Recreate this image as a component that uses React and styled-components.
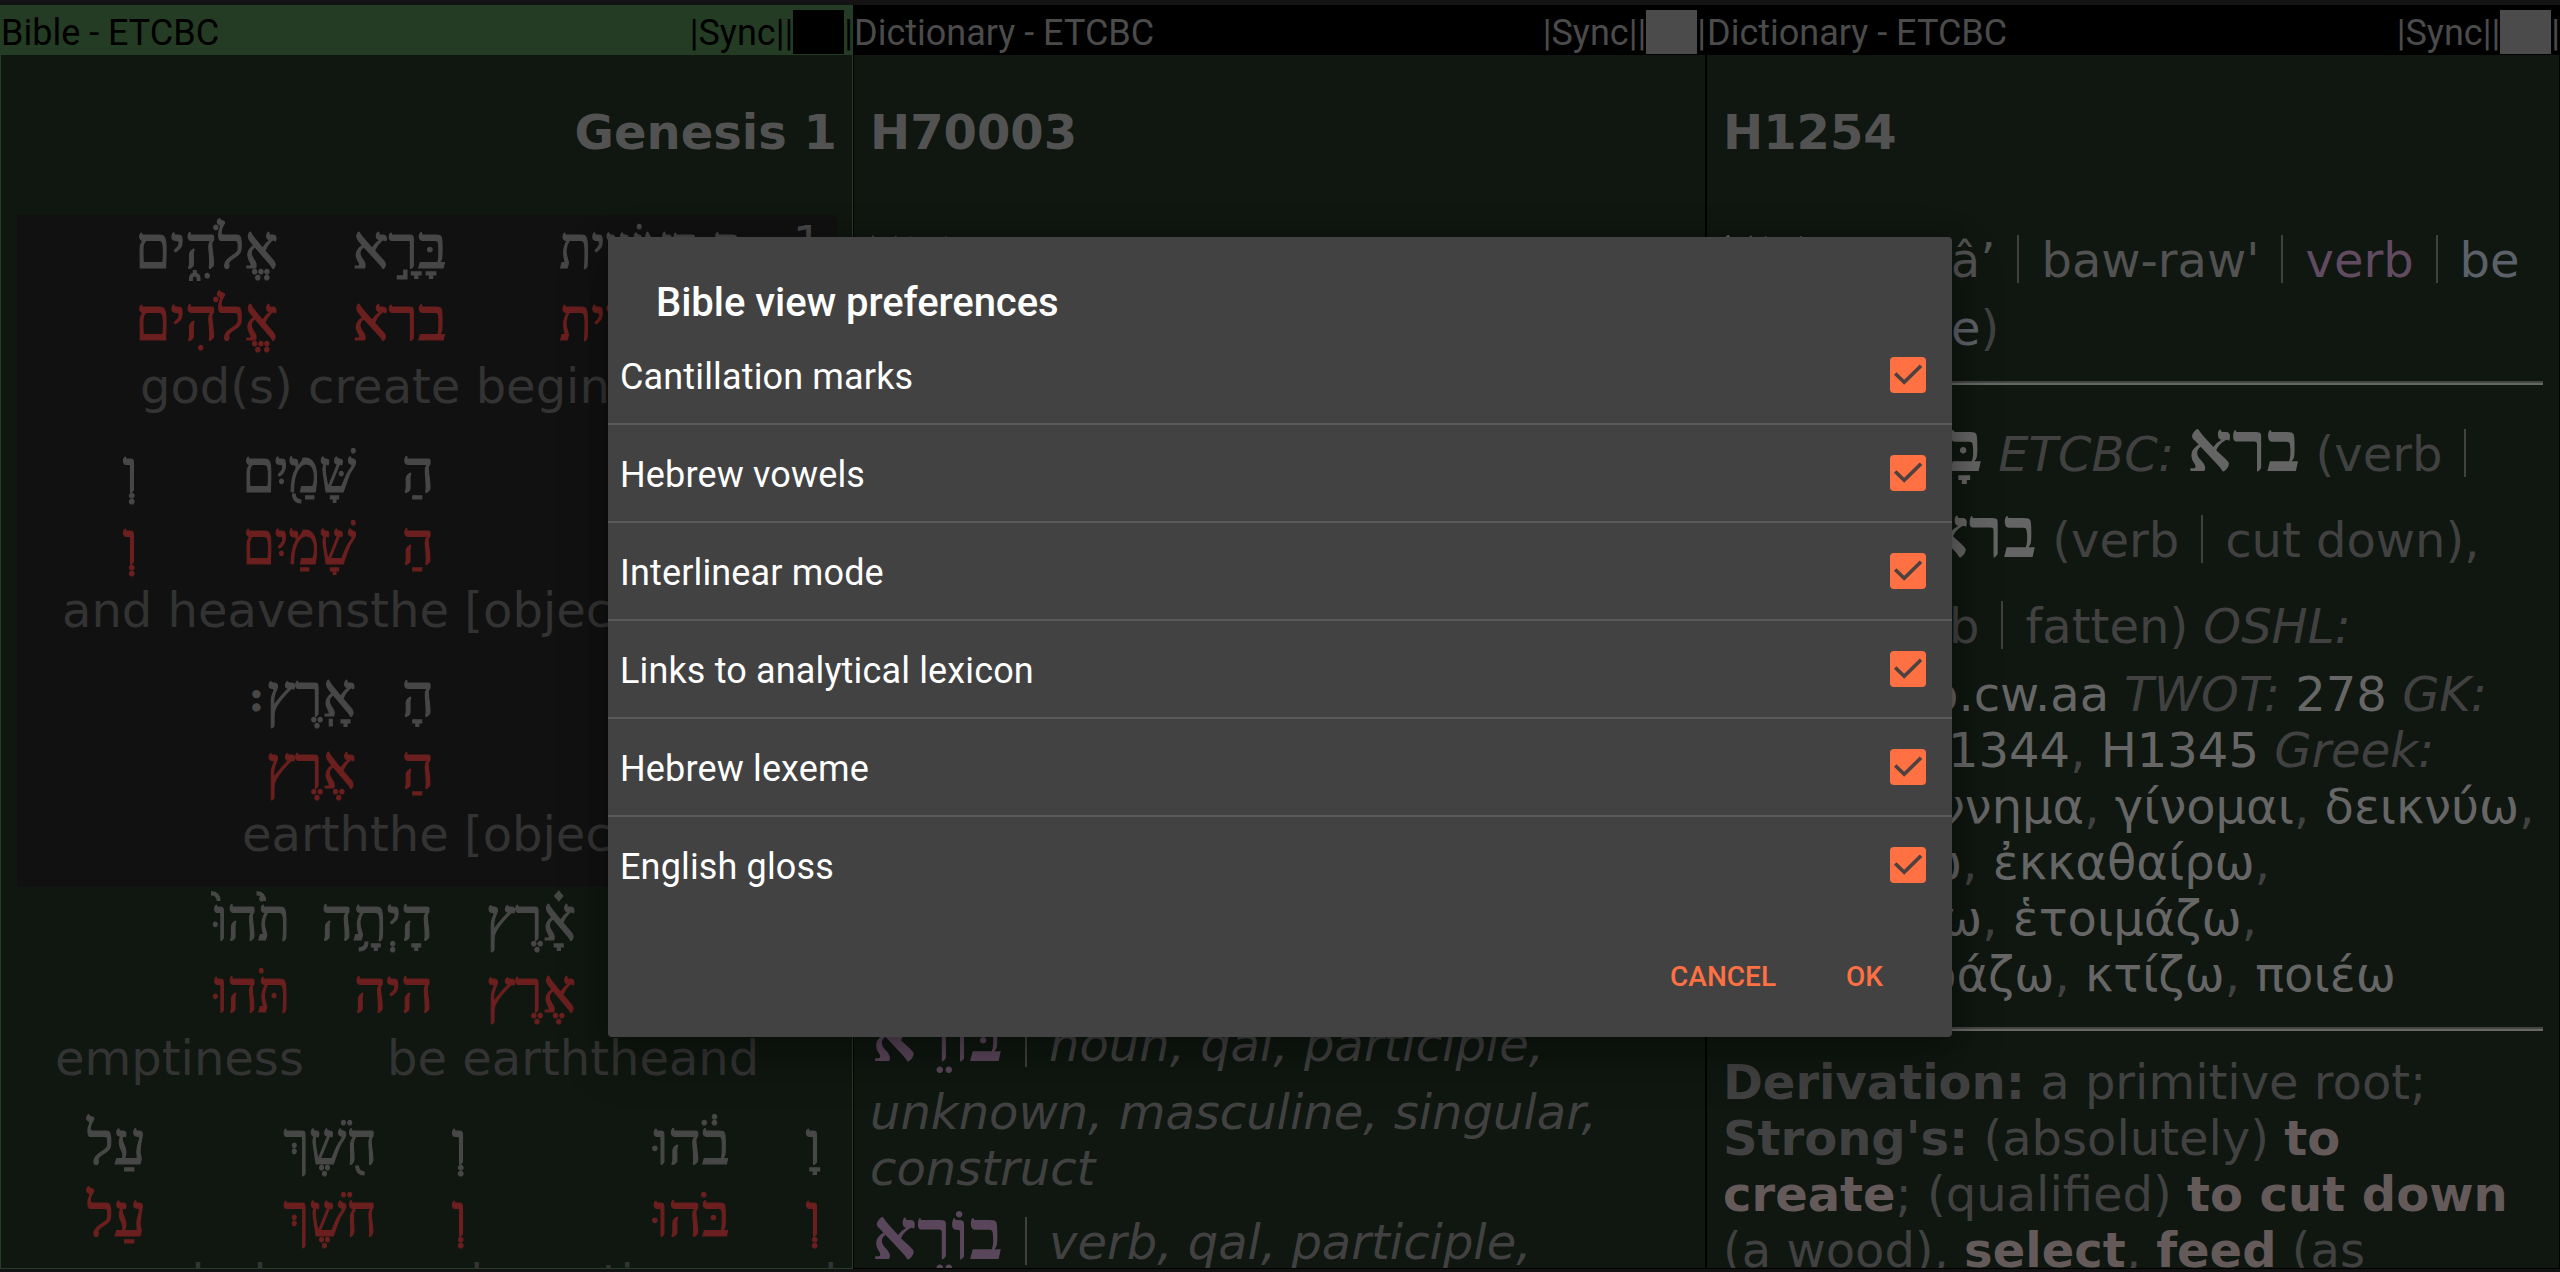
import React from "react";
import styled, { createGlobalStyle } from "styled-components";

const Global = createGlobalStyle`
  html, body { margin: 0; background: #131313; }
  * { box-sizing: border-box; }
`;

const Screen = styled.div`
  position: relative;
  width: 2560px;
  height: 1272px;
  padding: 5px 0 3px;
  display: flex;
  overflow: hidden;
  background: #131313;
  font-family: "DejaVu Sans", sans-serif;
  font-size: 48px;
  line-height: 56px;
  color: #3f3f3f;
`;

const Pane = styled.section`
  flex: none;
  width: ${(p) => p.$w}px;
  height: 1264px;
  display: flex;
  flex-direction: column;
  overflow: hidden;
`;

const TitleBar = styled.header`
  flex: none;
  height: 50px;
  padding: 5px 0 0 1px;
  display: flex;
  align-items: center;
  justify-content: space-between;
  font-family: Roboto, sans-serif;
  font-size: 36px;
  line-height: 42px;
  white-space: pre;
  background: ${(p) => (p.$active ? "#243c24" : "#000")};
  color: ${(p) => (p.$active ? "#000" : "#4b4b4b")};
`;

const BarActions = styled.span`
  display: flex;
  align-items: center;
`;

const Blocks = styled.i`
  display: block;
  width: 51px;
  height: 44px;
  margin-top: -2px;
  background: ${(p) => (p.$active ? "#000" : "#4b4b4b")};
`;

const PaneBody = styled.div`
  flex: 1;
  overflow: hidden;
  padding: 49px ${(p) => (p.$active ? 15 : 16)}px 0 16px;
  background: #0f1710;
  border: 1px solid ${(p) => (p.$active ? "#263d27" : "#000")};
  border-top: 0;
`;

const Heading = styled.h1`
  margin: 0;
  font-size: 48px;
  line-height: 56px;
  font-weight: bold;
  color: #525252;
  text-align: ${(p) => p.$align || "left"};
`;

const Verse = styled.div`
  margin-top: ${(p) => p.$top || 0}px;
  background: ${(p) => (p.$selected ? "#111111" : "transparent")};
`;

const Interlinear = styled.div`
  height: 224px;
`;

const WordRow = styled.div`
  direction: rtl;
  display: flex;
  height: 72px;
  font-family: "Liberation Serif", serif;
  font-size: 60px;
  line-height: 67px;
  color: ${(p) => (p.$lexeme ? "#6b1f1e" : "#474747")};
  -webkit-text-stroke: 1.2px currentColor;
`;

const Word = styled.span`
  flex: none;
  width: ${(p) => p.$w}px;
  margin-right: ${(p) => p.$gap}px;
  white-space: nowrap;
  transform: scaleX(${(p) => p.$fit});
  transform-origin: 100% 50%;
`;

const SofPasuq = styled(Word)`
  font-size: 44px;
  font-weight: bold;
`;

const VerseNumber = styled.span`
  flex: none;
  width: 33px;
  margin-right: 14px;
  font-family: "DejaVu Sans", sans-serif;
  font-size: 48px;
  line-height: 56px;
  -webkit-text-stroke: 0;
`;

const GlossRow = styled.div`
  display: flex;
  margin-top: -1px;
  white-space: pre;
  color: #333333;
`;

const Gloss = styled.span`
  flex: none;
  margin-left: ${(p) => p.$gap}px;
  width: ${(p) => p.$w}px;
`;

const Line = styled.div`
  height: 56px;
  margin-top: ${(p) => p.$top || 0}px;
  padding-left: ${(p) => p.$indent || 0}px;
  white-space: pre;
  color: ${(p) => p.$color || "#414141"};
`;

const Rule = styled.div`
  height: 4px;
  margin-top: ${(p) => p.$top}px;
  border-top: 2px solid #444644;
  border-bottom: 2px solid #666866;
`;

const Divider = styled.i`
  display: inline-block;
  width: 2px;
  height: 48px;
  margin: 0 22px;
  vertical-align: -6px;
  background: #414141;
`;

const Hebrew = styled.span`
  display: inline-block;
  direction: rtl;
  width: ${(p) => p.$w}px;
  margin-right: ${(p) => p.$after || 0}px;
  font-family: "Liberation Serif", serif;
  font-size: 70px;
  line-height: 0;
  font-weight: ${(p) => (p.$bold ? "bold" : "normal")};
  color: ${(p) => p.$color || "#646464"};
`;

const Ref = styled.span`
  color: #666666;
`;
const Pos = styled.span`
  color: #614b61;
`;
const Sense = styled.span`
  color: #5c6068;
`;
const Term = styled.b`
  color: #655a5a;
`;

const Dialog = styled.div`
  position: absolute;
  left: 608px;
  top: 237px;
  width: 1344px;
  height: 800px;
  border-radius: 4px;
  background: #424242;
  box-shadow: 0 20px 50px rgba(0, 0, 0, 0.3), 0 0 20px rgba(0, 0, 0, 0.2);
  color: #fff;
  font-family: Roboto, sans-serif;
  display: flex;
  flex-direction: column;
`;

const DialogTitle = styled.h2`
  margin: 0;
  height: 90px;
  padding: 42px 48px 0;
  font-size: 40px;
  line-height: 47px;
  font-weight: 500;
  letter-spacing: -0.05px;
`;

const Option = styled.label`
  display: flex;
  align-items: center;
  justify-content: space-between;
  height: ${(p) => (p.$last ? 96 : 98)}px;
  padding: 0 26px 0 12px;
  border-bottom: ${(p) => (p.$last ? 0 : 2)}px solid #5a5a5a;
  font-size: 36px;
  letter-spacing: 0.15px;
`;

const OptionText = styled.span`
  padding-top: 3px;
`;

const Box = styled.span`
  width: 36px;
  height: 36px;
  border-radius: 4px;
  background: #ff7043;
  display: flex;
  align-items: center;
  justify-content: center;
`;

const Buttons = styled.div`
  margin-top: auto;
  padding: 0 69px 42px 0;
  display: flex;
  justify-content: flex-end;
  gap: 70px;
`;

const Button = styled.button`
  border: 0;
  padding: 0;
  background: none;
  color: #ff7043;
  font: 500 28px/36px Roboto, sans-serif;
`;

const Check = () => (
  <Box>
    <svg width="36" height="36" viewBox="0 0 36 36" fill="none" stroke="#4b4240" strokeWidth="3.6">
      <path d="M5.2 16.5 L14.2 25.3 L31 8.7" />
    </svg>
  </Box>
);

/* Words are listed right to left as [text, right edge, left edge, horizontal fit] within the pane. */
function Words({ items, lexeme, number }) {
  let edge = number ? 788 : 835;
  return (
    <WordRow $lexeme={lexeme}>
      {number && <VerseNumber>{number}</VerseNumber>}
      {items.map(([text, right, left, fit = 1], i) => {
        const gap = edge - right;
        edge = left;
        const Cell = text === ":" ? SofPasuq : Word;
        return (
          <Cell key={i} $gap={gap} $w={right - left} $fit={fit}>
            {text}
          </Cell>
        );
      })}
    </WordRow>
  );
}

function Glosses({ items }) {
  let edge = 17;
  return (
    <GlossRow>
      {items.map(([text, left, right], i) => {
        const gap = left - edge;
        edge = right;
        return (
          <Gloss key={i} $gap={gap} $w={right - left}>
            {text}
          </Gloss>
        );
      })}
    </GlossRow>
  );
}

const VERSE_1 = [
  {
    number: "1",
    words: [["בְּ", 740, 714, 0.95], ["רֵאשִׁ֖ית", 697, 558, 0.87], ["בָּרָ֣א", 445, 355], ["אֱלֹהִ֑ים", 276, 137, 0.94]],
    lexemes: [["בְּ", 740, 714, 0.95], ["רֵאשִׁית", 697, 558, 0.87], ["ברא", 445, 355], ["אֱלֹהִים", 276, 137, 0.94]],
    glosses: [["god(s) create beginning", 140, 740]],
  },
  {
    words: [["הַ", 432, 405, 0.93], ["שָּׁמַ֖יִם", 354, 246, 0.865], ["וְ", 136, 123]],
    lexemes: [["הַ", 432, 405, 0.93], ["שָׁמַיִם", 354, 246, 0.865], ["וְ", 136, 123]],
    glosses: [["and heavensthe [object", 62, 740]],
  },
  {
    words: [["הָ", 432, 405, 0.93], ["אָֽרֶץ", 354, 269, 0.93], [":", 262, 246]],
    lexemes: [["הַ", 432, 405, 0.93], ["אֶרֶץ", 354, 269, 0.93]],
    glosses: [["earththe [object", 242, 740]],
  },
];

const VERSE_2 = [
  {
    words: [["אָ֗רֶץ", 574, 489, 0.93], ["הָיְתָ֥ה", 431, 322, 0.92], ["תֹ֙הוּ֙", 288, 212, 0.88]],
    lexemes: [["אֶרֶץ", 574, 489, 0.93], ["היה", 431, 355, 0.93], ["תֹּהוּ", 288, 212, 0.88]],
    glosses: [["emptiness", 55, 306], ["be earththeand", 387, 762]],
  },
  {
    words: [["וָ", 819, 807], ["בֹ֔הוּ", 728, 653, 0.97], ["וְ", 465, 453], ["חֹ֖שֶׁךְ", 375, 281, 0.87], ["עַל", 144, 87, 0.95]],
    lexemes: [["וְ", 819, 807], ["בֹּהוּ", 728, 653, 0.97], ["וְ", 465, 453], ["חֹשֶׁךְ", 375, 281, 0.87], ["עַל", 144, 87, 0.95]],
    glosses: [["upon darkness", 38, 390], ["and", 393, 490], ["emptiness", 495, 745], ["and", 747, 840]],
  },
];

const Segment = ({ data }) => (
  <Interlinear>
    <Words items={data.words} number={data.number} />
    <Words items={data.lexemes} lexeme />
    <Glosses items={data.glosses} />
  </Interlinear>
);

const OPTIONS = [
  "Cantillation marks",
  "Hebrew vowels",
  "Interlinear mode",
  "Links to analytical lexicon",
  "Hebrew lexeme",
  "English gloss",
];

const Bar = ({ title, active }) => (
  <TitleBar $active={active}>
    <span>{title}</span>
    <BarActions>
      |Sync||
      <Blocks $active={active} />|
    </BarActions>
  </TitleBar>
);

export default function App() {
  return (
    <Screen>
      <Global />
      <Pane $w={853}>
        <Bar title="Bible - ETCBC" active />
        <PaneBody $active>
          <Heading $align="right">Genesis 1</Heading>
          <Verse $top={55} $selected>
            {VERSE_1.map((s, i) => (
              <Segment key={i} data={s} />
            ))}
          </Verse>
          <Verse>
            {VERSE_2.map((s, i) => (
              <Segment key={i} data={s} />
            ))}
          </Verse>
        </PaneBody>
      </Pane>

      <Pane $w={853}>
        <Bar title="Dictionary - ETCBC" />
        <PaneBody>
          <Heading>H70003</Heading>
          <Line $top={72}>
            <Hebrew $w={106} $color="#414141">ברא</Hebrew>
          </Line>
          <Line $top={728}>
            <Hebrew $w={133} $bold $color="#5a465a">בּוֹרֵא</Hebrew>
            <Divider />
            <i>noun, qal, participle,</i>
          </Line>
          <Line $top={12}>
            <i>unknown, masculine, singular,</i>
          </Line>
          <Line>
            <i>construct</i>
          </Line>
          <Line $top={18}>
            <Hebrew $w={133} $bold $color="#5a465a">בוֹרֵא</Hebrew>
            <Divider />
            <i>verb, qal, participle,</i>
          </Line>
        </PaneBody>
      </Pane>

      <Pane $w={854}>
        <Bar title="Dictionary - ETCBC" />
        <PaneBody>
          <Heading>H1254</Heading>
          <Line $top={72} $color="#525252">
            <Hebrew $w={108} $after={100} $bold>בָּרָא</Hebrew>râ’
            <Divider />
            baw-raw'
            <Divider />
            <Pos>verb</Pos>
            <Divider />
            <Sense>be</Sense>
          </Line>
          <Line $top={12} $indent={228}>
            <Sense>e</Sense>)
          </Line>
          <Rule $top={25} />
          <Line $top={41} $indent={160}>
            <Hebrew $w={100} $bold>בָּ</Hebrew> <i>ETCBC:</i> <Hebrew $w={111} $bold>ברא</Hebrew> (verb
            <Divider />
          </Line>
          <Line $top={30} $indent={204}>
            <Hebrew $w={110} $bold>ברא</Hebrew> (verb
            <Divider />
            cut down),
          </Line>
          <Line $top={30} $indent={226}>
            b<Divider />
            fatten) <i>OSHL:</i>
          </Line>
          <Line $top={12} $indent={205}>
            <Ref>b.cw.aa</Ref> <i>TWOT:</i> <Ref>278</Ref> <i>GK:</i>
          </Line>
          <Line $indent={225}>
            <Ref>1344</Ref>, <Ref>H1345</Ref> <i>Greek:</i>
          </Line>
          <Line $indent={215}>
            <Ref>ννημα</Ref>, <Ref>γίνομαι</Ref>, <Ref>δεικνύω</Ref>,
          </Line>
          <Line $indent={199}>
            <Ref>ω</Ref>, <Ref>ἐκκαθαίρω</Ref>,
          </Line>
          <Line $indent={219}>
            <Ref>ω</Ref>, <Ref>ἑτοιμάζω</Ref>,
          </Line>
          <Line $indent={203}>
            <Ref>ράζω</Ref>, <Ref>κτίζω</Ref>, <Ref>ποιέω</Ref>
          </Line>
          <Rule $top={25} />
          <Line $top={23}>
            <b>Derivation:</b> a primitive root;
          </Line>
          <Line>
            <b>Strong's:</b> (absolutely) <Term>to</Term>
          </Line>
          <Line>
            <Term>create</Term>; (qualified) <Term>to cut down</Term>
          </Line>
          <Line>
            (a wood), <Term>select</Term>, <Term>feed</Term> (as
          </Line>
        </PaneBody>
      </Pane>

      <Dialog>
        <DialogTitle>Bible view preferences</DialogTitle>
        {OPTIONS.map((o, i) => (
          <Option key={o} $last={i === OPTIONS.length - 1}>
            <OptionText>{o}</OptionText>
            <Check />
          </Option>
        ))}
        <Buttons>
          <Button>CANCEL</Button>
          <Button>OK</Button>
        </Buttons>
      </Dialog>
    </Screen>
  );
}
